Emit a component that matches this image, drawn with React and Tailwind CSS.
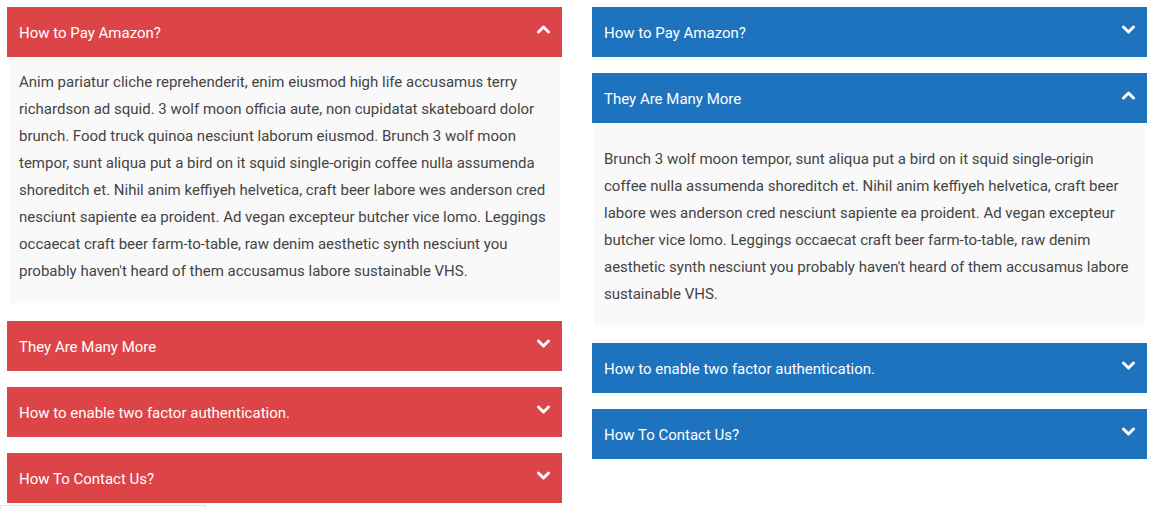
import React from 'react'

const Chevron = ({ up }) => (
  <svg width="13" height="9" viewBox="0 0 13 9" className="mb-[5px]">
    <polyline
      points={up ? '1.5,7 6.5,2 11.5,7' : '1.5,2 6.5,7 11.5,2'}
      fill="none"
      stroke="white"
      strokeWidth="3"
      strokeLinecap="round"
      strokeLinejoin="round"
    />
  </svg>
)

function Header({ title, open, color }) {
  return (
    <div className={`flex h-[50px] items-center justify-between pl-3 pr-3 text-[15px] text-white ${color}`}>
      <span className="pt-[2px]">{title}</span>
      <Chevron up={open} />
    </div>
  )
}

const leftText =
  "Anim pariatur cliche reprehenderit, enim eiusmod high life accusamus terry richardson ad squid. 3 wolf moon officia aute, non cupidatat skateboard dolor brunch. Food truck quinoa nesciunt laborum eiusmod. Brunch 3 wolf moon tempor, sunt aliqua put a bird on it squid single-origin coffee nulla assumenda shoreditch et. Nihil anim keffiyeh helvetica, craft beer labore wes anderson cred nesciunt sapiente ea proident. Ad vegan excepteur butcher vice lomo. Leggings occaecat craft beer farm-to-table, raw denim aesthetic synth nesciunt you probably haven't heard of them accusamus labore sustainable VHS."

const rightText =
  "Brunch 3 wolf moon tempor, sunt aliqua put a bird on it squid single-origin coffee nulla assumenda shoreditch et. Nihil anim keffiyeh helvetica, craft beer labore wes anderson cred nesciunt sapiente ea proident. Ad vegan excepteur butcher vice lomo. Leggings occaecat craft beer farm-to-table, raw denim aesthetic synth nesciunt you probably haven't heard of them accusamus labore sustainable VHS."

export default function App() {
  const red = 'bg-[#dd4447]'
  const blue = 'bg-[#1e73be]'
  return (
    <div
      className="relative h-[509px] w-[1153px] overflow-hidden bg-white"
      style={{ fontFamily: 'Roboto, "Liberation Sans", sans-serif' }}
    >
      <div className="flex gap-[30px] pl-[7px] pt-[7px]">
        <div className="flex w-[555px] shrink-0 flex-col">
          <Header title="How to Pay Amazon?" open color={red} />
          <div className="mx-[2px] mt-px bg-[#f9f9f9] px-[10px] pb-[18px] pt-[11px] text-[15px] leading-[27px] text-[#444]">
            {leftText}
          </div>
          <div className="mt-[18px] flex flex-col gap-4">
            <Header title="They Are Many More" color={red} />
            <Header title="How to enable two factor authentication." color={red} />
            <Header title="How To Contact Us?" color={red} />
          </div>
        </div>
        <div className="flex w-[555px] shrink-0 flex-col">
          <Header title="How to Pay Amazon?" color={blue} />
          <div className="mt-4">
            <Header title="They Are Many More" open color={blue} />
          </div>
          <div className="mx-[2px] mt-px bg-[#f9f9f9] px-[10px] pb-[17px] pt-[22px] text-[15px] leading-[27px] text-[#444]">
            {rightText}
          </div>
          <div className="mt-[18px] flex flex-col gap-4">
            <Header title="How to enable two factor authentication." color={blue} />
            <Header title="How To Contact Us?" color={blue} />
          </div>
        </div>
      </div>
      <div className="absolute left-0 top-[505px] h-[10px] w-[206px] border border-[#e2e2e2] bg-white" />
    </div>
  )
}
